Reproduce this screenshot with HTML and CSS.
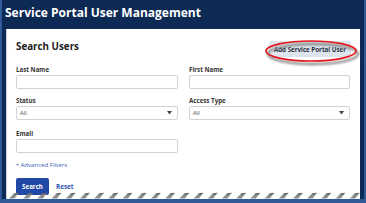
FILE: index.html
```html
<!DOCTYPE html>
<html lang="en">
<head>
<meta charset="utf-8">
<title>Service Portal User Management</title>
<link rel="stylesheet" href="styles.css">
</head>
<body>
<div class="frame">
  <header class="topbar">
    <h1 class="title">Service Portal User Management</h1>
  </header>
  <main class="card">
    <div class="card-head">
      <h2 class="card-title">Search Users</h2>
      <button class="add-btn" type="button">Add Service Portal User</button>
    </div>
    <form class="fields">
      <div class="field">
        <label class="label">Last Name</label>
        <div class="input"></div>
      </div>
      <div class="field">
        <label class="label">First Name</label>
        <div class="input"></div>
      </div>
      <div class="field">
        <label class="label">Status</label>
        <div class="input select"><span class="value">All</span><svg class="caret" width="5" height="4" viewBox="0 0 5 4"><polygon points="0,0 5,0 2.5,3.5" fill="#444"/></svg></div>
      </div>
      <div class="field">
        <label class="label">Access Type</label>
        <div class="input select"><span class="value">All</span><svg class="caret" width="5" height="4" viewBox="0 0 5 4"><polygon points="0,0 5,0 2.5,3.5" fill="#444"/></svg></div>
      </div>
      <div class="field email">
        <label class="label">Email</label>
        <div class="input"></div>
      </div>
    </form>
    <div class="adv"><span class="plus">+</span> Advanced Filters</div>
    <div class="actions">
      <button class="search-btn" type="button">Search</button>
      <span class="reset">Reset</span>
    </div>

    <svg class="highlight" width="104" height="36" viewBox="0 0 104 36">
      <defs>
        <filter id="blur" x="-20%" y="-50%" width="140%" height="200%">
          <feGaussianBlur stdDeviation="1.3"/>
        </filter>
      </defs>
      <ellipse cx="50" cy="18" rx="45" ry="10" fill="none" stroke="#8a8a8a" stroke-width="2.4" filter="url(#blur)"/>
      <ellipse cx="48" cy="15" rx="45" ry="10" fill="none" stroke="#e3161b" stroke-width="1.7"/>
    </svg>

    <svg class="torn" width="354" height="7" viewBox="0 0 354 7" preserveAspectRatio="none">
      <defs>
        <pattern id="zig" x="2" y="0" width="14.2" height="7" patternUnits="userSpaceOnUse">
          <polygon points="0,6.5 5,1.5 9.5,0.8 5.5,6.5" fill="#8c8c8c"/>
          <polygon points="5,1.5 9.5,0.8 8.3,2.4 4,2.6" fill="#5e5e5e"/>
        </pattern>
      </defs>
      <rect x="0" y="0" width="354" height="7" fill="url(#zig)"/>
    </svg>
  </main>
</div>
</body>
</html>
```
FILE: styles.css
```css
* { box-sizing: border-box; }
html, body { margin: 0; padding: 0; }
body {
  font-family: "Open Sans", "Liberation Sans", sans-serif;
  background: #ffffff;
}
.frame {
  width: 366px;
  height: 203px;
  background: #0d2a55;
  border-left: 2px solid #2f5a97;
  border-right: 2px solid #2f5a97;
  border-bottom: 4px solid #2f5a97;
  display: flex;
  flex-direction: column;
  overflow: hidden;
}
.topbar {
  height: 29px;
  flex: none;
  padding-left: 3px;
  display: flex;
  align-items: center;
}
.title {
  margin: 0;
  color: #ffffff;
  font-size: 12px;
  font-weight: 700;
  line-height: 16px;
  position: relative;
  top: -2px;
}
.card {
  flex: 1;
  margin: 0 4px;
  background: #ffffff;
  border-left: 1px solid #cfd4db;
  padding: 11px 9px 0 9px;
  position: relative;
}
.card-head {
  display: flex;
  justify-content: space-between;
  align-items: flex-start;
  height: 17px;
}
.card-title {
  margin: 0;
  font-size: 9.8px;
  font-weight: 700;
  line-height: 14px;
  color: #222222;
}
.add-btn {
  margin: 1px 0 0 0;
  height: 16px;
  width: 82px;
  padding: 0;
  border: none;
  border-radius: 2px;
  background: #dde4ee;
  color: #262c38;
  font-family: inherit;
  font-size: 6.2px;
  font-weight: 700;
  line-height: 17px;
  text-align: center;
}
.fields {
  margin: 8px 0 0 0;
  display: grid;
  grid-template-columns: 162px 161px;
  column-gap: 11px;
  row-gap: 7px;
}
.field { display: flex; flex-direction: column; }
.field.email { margin-top: 2px; }
.label {
  font-size: 6.2px;
  font-weight: 700;
  line-height: 9px;
  color: #333333;
  margin-bottom: 1px;
}
.input {
  height: 14px;
  border: 1px solid #cfd3d8;
  border-radius: 2px;
  background: #ffffff;
}
.select {
  display: flex;
  align-items: center;
  justify-content: space-between;
  padding: 0 5px 0 3px;
}
.value {
  font-size: 6px;
  color: #555555;
  line-height: 12px;
}
.caret { display: block; }
.adv {
  margin-top: 7px;
  font-size: 6.1px;
  line-height: 9px;
  color: #3a5fb8;
}
.plus { font-size: 5px; font-weight: 700; }
.actions {
  margin-top: 8px;
  display: flex;
  align-items: center;
  gap: 7px;
}
.search-btn {
  width: 33px;
  height: 17px;
  padding: 0;
  border: none;
  border-radius: 2px;
  background: #2248a6;
  color: #ffffff;
  font-family: inherit;
  font-size: 6.2px;
  font-weight: 700;
  line-height: 17px;
}
.reset {
  font-size: 6.3px;
  font-weight: 700;
  color: #2f55b2;
  line-height: 9px;
}
.highlight {
  position: absolute;
  left: 256px;
  top: 7px;
}
.torn {
  position: absolute;
  left: 0;
  bottom: 0;
  display: block;
}
```
